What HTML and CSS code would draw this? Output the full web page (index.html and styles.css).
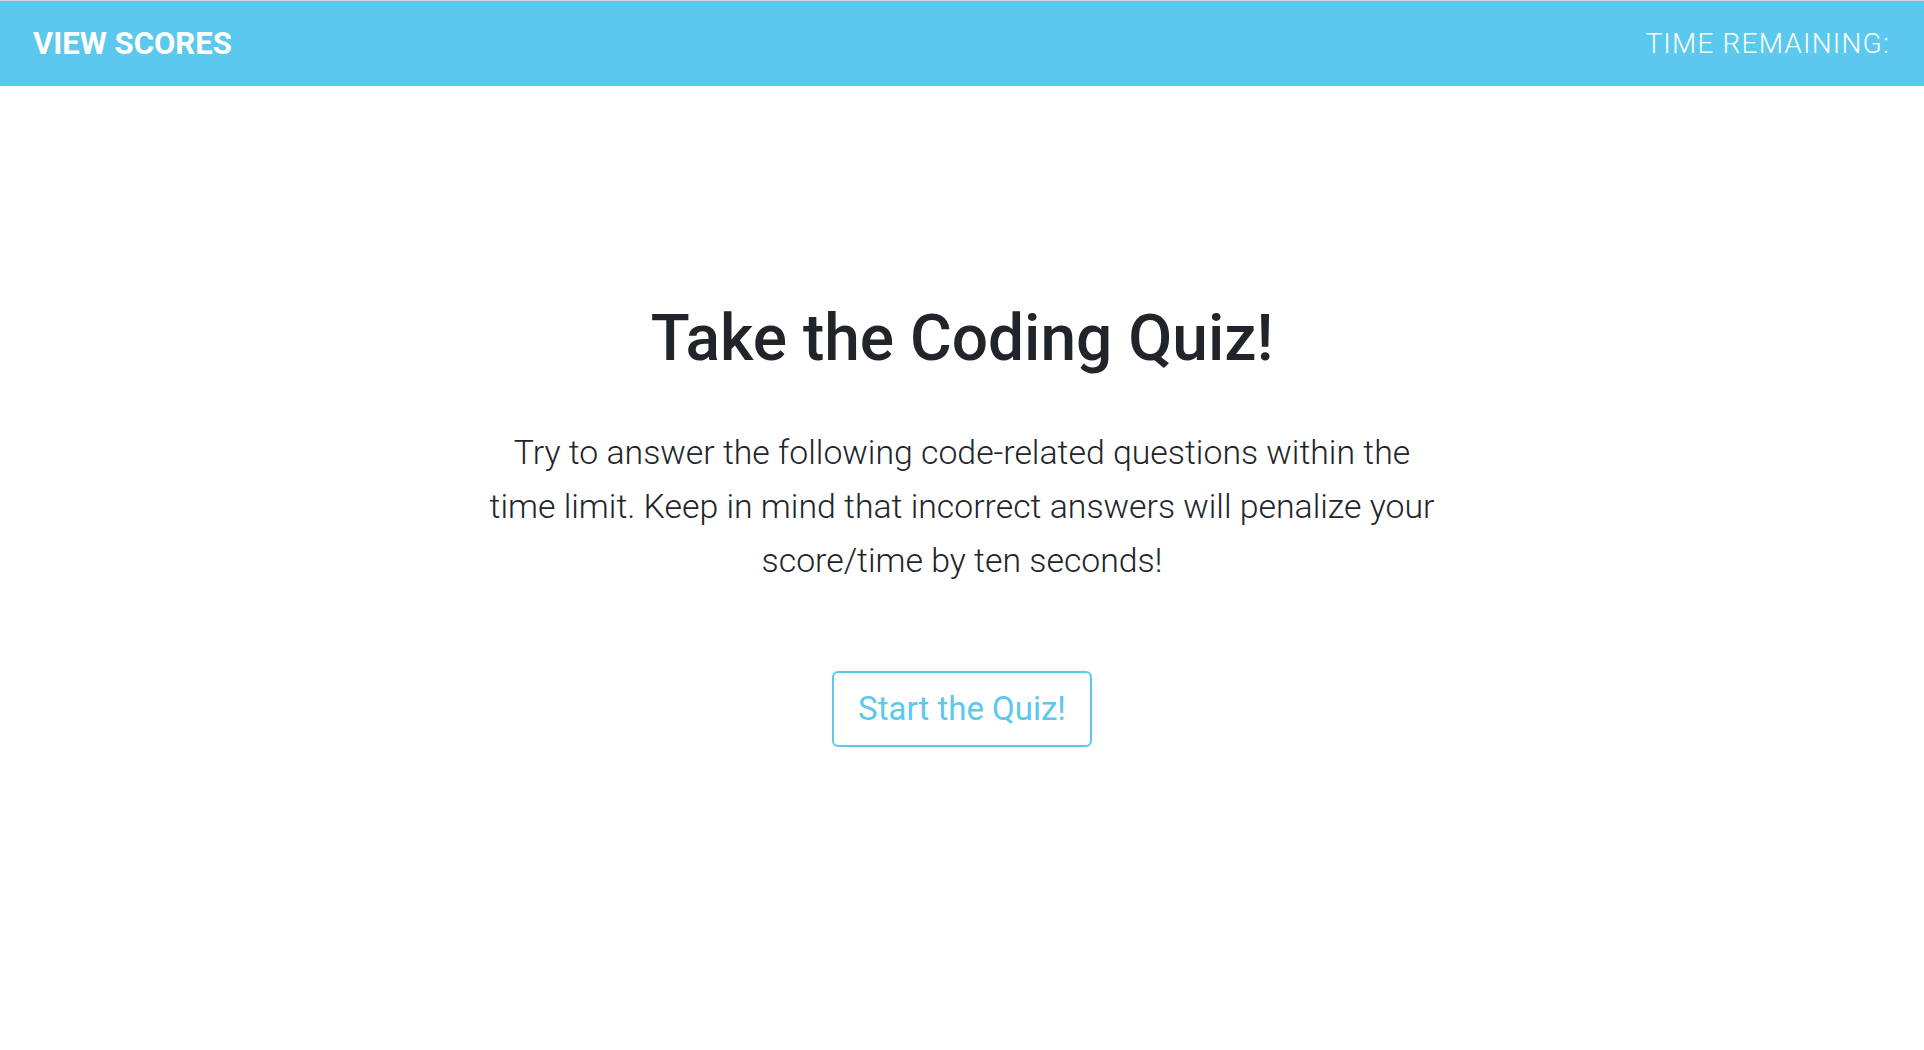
FILE: index.html
```html
<!DOCTYPE html>
<html lang="en">
<head>
<meta charset="utf-8">
<title>Coding Quiz</title>
<link rel="stylesheet" href="styles.css">
</head>
<body>
<header class="topbar">
  <a class="view-scores" href="#">VIEW SCORES</a>
  <div class="timer">TIME REMAINING:</div>
</header>
<main class="intro">
  <h1 class="title">Take the Coding Quiz!</h1>
  <p class="lead">Try to answer the following code-related questions within the time limit. Keep in mind that incorrect answers will penalize your score/time by ten seconds!</p>
  <button class="start-btn" type="button">Start the Quiz!</button>
</main>
</body>
</html>
```
FILE: styles.css
```css
* { box-sizing: border-box; }
html, body { margin: 0; padding: 0; background: #ffffff; }
body { font-family: Roboto, "Liberation Sans", sans-serif; color: #212529; }

.topbar {
  display: flex;
  align-items: center;
  justify-content: space-between;
  height: 86px;
  border-top: 1px solid #cfd4d8;
  background: #5bc8ed;
  padding: 0 34px 0 33px;
}
.view-scores {
  color: #ffffff;
  text-decoration: none;
  font-weight: 700;
  font-size: 31px;
}
.timer {
  color: #ffffff;
  font-weight: 300;
  font-size: 28px;
  letter-spacing: 1.2px;
}

.intro {
  display: flex;
  flex-direction: column;
  align-items: center;
  padding-top: 215px;
  text-align: center;
}
.title {
  margin: 0;
  font-size: 64px;
  font-weight: 500;
  line-height: 1.2;
  color: #212529;
}
.lead {
  margin: 48px 0 0;
  max-width: 955px;
  font-size: 33.8px;
  font-weight: 300;
  line-height: 54px;
  color: #212529;
}
.start-btn {
  margin-top: 83px;
  padding: 10px 24px;
  border: 2px solid #5bc8ed;
  border-radius: 6px;
  background: #ffffff;
  color: #5bc8ed;
  font-family: Roboto, "Liberation Sans", sans-serif;
  font-size: 33px;
  font-weight: 400;
  line-height: 52px;
  cursor: pointer;
}
```
